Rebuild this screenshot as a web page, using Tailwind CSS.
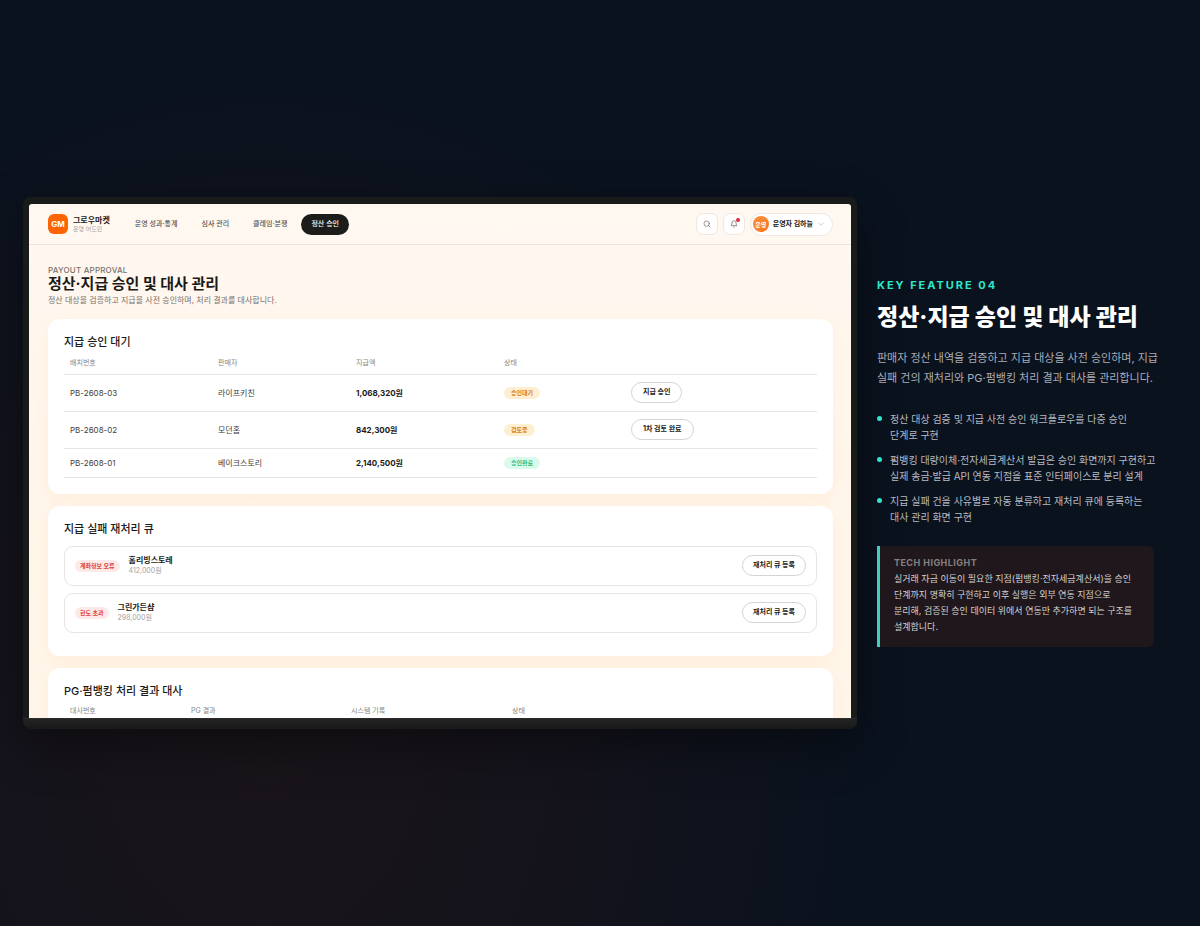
<!DOCTYPE html>
<html lang="ko">
<head>
  <title>정산·지급 승인 및 대사 관리</title>
  <meta charset="UTF-8">
  <meta name="viewport" content="width=device-width, initial-scale=1.0">
  <script src="https://cdn.jsdelivr.net/npm/@tailwindcss/browser@4"></script>
</head>
<body class="min-h-screen bg-[#0a121e] bg-[radial-gradient(ellipse_50%_75%_at_22%_82%,#19151a_0%,#15131b_45%,#0a121e_100%)] font-['Inter','Noto_Sans_CJK_KR',sans-serif] text-white">

  <main class="flex min-h-screen items-center gap-5 pl-[23px] pr-[46px]">

    <!-- Laptop -->
    <div class="min-w-0 flex-1 rounded-t-xl rounded-b-lg shadow-[0_16px_48px_rgba(0,0,0,0.4)]">
      <div class="rounded-t-lg bg-[#191b1b] px-[6px] pt-[7px]">
        <div class="aspect-[16/10] overflow-hidden rounded-t-[3px] bg-linear-to-b from-[#fff8f1] via-[#fff6eb] to-[#fff6e9] text-[#1c1917]">

          <!-- Top bar -->
          <header class="flex h-[41px] items-center border-b border-[#f0e4da] pr-[18px] pl-[19px]">
            <div class="flex items-center gap-[5px]">
              <span class="flex size-5 items-center justify-center rounded-md bg-[#fc6404] text-[8px] font-bold text-white">GM</span>
              <div>
                <p class="text-[8px] leading-[9px] font-bold">그로우마켓</p>
                <p class="text-[6px] leading-[8px] text-[#a8a29e]">운영 어드민</p>
              </div>
            </div>
            <nav class="ml-[15px] flex items-center gap-1 text-[7px] font-medium text-[#57534e]">
              <a href="#" class="flex h-[21px] items-center rounded-full px-[10px]">운영 성과·통계</a>
              <a href="#" class="flex h-[21px] items-center rounded-full px-[10px]">심사 관리</a>
              <a href="#" class="flex h-[21px] items-center rounded-full px-[10px]">클레임·분쟁</a>
              <a href="#" class="flex h-[21px] items-center rounded-full bg-[#1c1c1a] px-[10px] text-white">정산 승인</a>
            </nav>
            <div class="ml-auto flex items-center gap-[5px]">
              <button aria-label="검색" class="flex size-[22px] items-center justify-center rounded-[7px] border border-[#efe7e0] bg-white text-[#78716c]">
                <svg class="size-2" viewBox="0 0 24 24" fill="none" stroke="currentColor" stroke-width="2.2" stroke-linecap="round"><circle cx="11" cy="11" r="8"/><path d="m21 21-4.3-4.3"/></svg>
              </button>
              <button aria-label="알림" class="relative flex size-[22px] items-center justify-center rounded-[7px] border border-[#efe7e0] bg-white text-[#78716c]">
                <svg class="size-2" viewBox="0 0 24 24" fill="none" stroke="currentColor" stroke-width="2.2" stroke-linecap="round" stroke-linejoin="round"><path d="M6 8a6 6 0 0 1 12 0c0 7 3 9 3 9H3s3-2 3-9"/><path d="M10.3 21a1.94 1.94 0 0 0 3.4 0"/></svg>
                <span class="absolute top-1 right-1 size-1 rounded-full bg-[#d92c3f]"></span>
              </button>
              <button class="flex h-[23px] items-center gap-1 rounded-full border border-[#efe7e0] bg-white pr-[7px] pl-[2px]">
                <span class="flex size-4 items-center justify-center rounded-full bg-linear-to-br from-[#fb923c] to-[#f97316] text-[6px] font-bold text-white">운영</span>
                <span class="text-[7px] font-bold">운영자 김하늘</span>
                <svg class="size-2 text-[#b5aea8]" viewBox="0 0 24 24" fill="none" stroke="currentColor" stroke-width="2" stroke-linecap="round" stroke-linejoin="round"><path d="m5 9 7 7 7-7"/></svg>
              </button>
            </div>
          </header>

          <div class="pt-5 pr-[18px] pl-[19px]">
            <p class="text-[8px] leading-[10px] font-medium tracking-wide text-[#78716c]">PAYOUT APPROVAL</p>
            <h1 class="text-[15px] leading-[18px] font-bold">정산·지급 승인 및 대사 관리</h1>
            <p class="text-[8px] leading-[14px] text-[#78716c]">정산 대상을 검증하고 지급을 사전 승인하며, 처리 결과를 대사합니다.</p>

            <div class="mt-3 flex flex-col gap-3">

              <!-- Pending payouts -->
              <section class="rounded-xl bg-white p-4 shadow-[0_4px_16px_rgba(255,140,50,0.08)]">
                <h2 class="text-[11px] leading-[14px] font-medium">지급 승인 대기</h2>
                <table class="mt-[3px] w-full table-fixed text-left text-[8px] text-[#44403c]">
                  <colgroup>
                    <col class="w-[148px]"><col class="w-[138px]"><col class="w-[148px]"><col class="w-[127px]"><col>
                  </colgroup>
                  <thead class="text-[7px] text-[#8a8580]">
                    <tr class="h-[22px] border-b border-[#e7e5e4]">
                      <th class="px-[6px] font-normal">배치번호</th>
                      <th class="px-[6px] font-normal">판매자</th>
                      <th class="px-[6px] font-normal">지급액</th>
                      <th class="px-[6px] font-normal">상태</th>
                      <th class="px-[6px]"></th>
                    </tr>
                  </thead>
                  <tbody>
                    <tr class="h-[37px] border-b border-[#e7e5e4]">
                      <td class="px-[6px]">PB-2608-03</td>
                      <td class="px-[6px]">라이프키친</td>
                      <td class="px-[6px] font-bold text-[#1c1917]">1,068,320원</td>
                      <td class="px-[6px]"><span class="inline-flex h-3 items-center rounded-full bg-[#ffefd2] px-[7px] text-[6px] font-bold text-[#d97a14]">승인대기</span></td>
                      <td class="px-[6px]"><button class="flex h-[21px] items-center rounded-full border border-[#d6d3d1] px-[11px] text-[7px] font-bold text-[#1c1917]">지급 승인</button></td>
                    </tr>
                    <tr class="h-[37px] border-b border-[#e7e5e4]">
                      <td class="px-[6px]">PB-2608-02</td>
                      <td class="px-[6px]">모던홈</td>
                      <td class="px-[6px] font-bold text-[#1c1917]">842,300원</td>
                      <td class="px-[6px]"><span class="inline-flex h-3 items-center rounded-full bg-[#ffefd2] px-[7px] text-[6px] font-bold text-[#d97a14]">검토중</span></td>
                      <td class="px-[6px]"><button class="flex h-[21px] items-center rounded-full border border-[#d6d3d1] px-[11px] text-[7px] font-bold text-[#1c1917]">1차 검토 완료</button></td>
                    </tr>
                    <tr class="h-[29px] border-b border-[#e7e5e4]">
                      <td class="px-[6px]">PB-2608-01</td>
                      <td class="px-[6px]">베이크스토리</td>
                      <td class="px-[6px] font-bold text-[#1c1917]">2,140,500원</td>
                      <td class="px-[6px]"><span class="inline-flex h-3 items-center rounded-full bg-[#dcfaec] px-[7px] text-[6px] font-bold text-[#1fc184]">승인완료</span></td>
                      <td></td>
                    </tr>
                  </tbody>
                </table>
              </section>

              <!-- Failed payouts -->
              <section class="rounded-xl bg-white p-4 pb-[23px] shadow-[0_4px_16px_rgba(255,140,50,0.08)]">
                <h2 class="text-[11px] leading-[14px] font-medium">지급 실패 재처리 큐</h2>
                <ul class="mt-[10px] flex flex-col gap-[7px]">
                  <li class="flex h-10 items-center gap-[9px] rounded-[9px] border border-[#e7e5e4] px-[10px]">
                    <span class="flex h-3 items-center rounded-full bg-[#fee9e9] px-[5px] text-[6px] font-bold text-[#e0413c]">계좌정보 오류</span>
                    <div>
                      <p class="text-[8px] leading-[11px] font-bold">홈리빙스토레</p>
                      <p class="text-[7px] leading-[10px] text-[#a8a29e]">412,000원</p>
                    </div>
                    <button class="ml-auto flex h-[21px] items-center rounded-full border border-[#d6d3d1] px-[10px] text-[7px] font-bold">재처리 큐 등록</button>
                  </li>
                  <li class="flex h-10 items-center gap-[9px] rounded-[9px] border border-[#e7e5e4] px-[10px]">
                    <span class="flex h-3 items-center rounded-full bg-[#fee9e9] px-[5px] text-[6px] font-bold text-[#e0413c]">한도 초과</span>
                    <div>
                      <p class="text-[8px] leading-[11px] font-bold">그린가든샵</p>
                      <p class="text-[7px] leading-[10px] text-[#a8a29e]">298,000원</p>
                    </div>
                    <button class="ml-auto flex h-[21px] items-center rounded-full border border-[#d6d3d1] px-[10px] text-[7px] font-bold">재처리 큐 등록</button>
                  </li>
                </ul>
              </section>

              <!-- Reconciliation -->
              <section class="rounded-xl bg-white p-4 shadow-[0_4px_16px_rgba(255,140,50,0.08)]">
                <h2 class="text-[11px] leading-[14px] font-medium">PG·펌뱅킹 처리 결과 대사</h2>
                <table class="mt-[3px] w-full table-fixed text-left text-[7px] text-[#8a8580]">
                  <colgroup>
                    <col class="w-[121px]"><col class="w-[160px]"><col class="w-[161px]"><col>
                  </colgroup>
                  <thead>
                    <tr class="h-[22px] border-b border-[#e7e5e4]">
                      <th class="px-[6px] font-normal">대사번호</th>
                      <th class="px-[6px] font-normal">PG 결과</th>
                      <th class="px-[6px] font-normal">시스템 기록</th>
                      <th class="px-[6px] font-normal">상태</th>
                    </tr>
                  </thead>
                </table>
              </section>
            </div>
          </div>
        </div>
      </div>
      <div class="h-[11px] rounded-b-lg border-t border-[#2c2c2c] bg-linear-to-b from-[#232323] to-[#191919]"></div>
    </div>

    <!-- Feature description -->
    <aside class="w-[277px] shrink-0 pb-[2px]">
      <p class="text-[11px] leading-[14px] font-bold tracking-[0.18em] text-[#2ee6cb]">KEY FEATURE 04</p>
      <h2 class="mt-[10px] text-[23px] leading-[30px] font-extrabold whitespace-nowrap">정산·지급 승인 및 대사 관리</h2>
      <p class="mt-4 text-[11px] leading-5 whitespace-nowrap text-[#a9adb6]">판매자 정산 내역을 검증하고 지급 대상을 사전 승인하며, 지급<br>실패 건의 재처리와 PG·펌뱅킹 처리 결과 대사를 관리합니다.</p>
      <ul class="mt-[23px] flex flex-col gap-[9px] text-[10px] leading-4 whitespace-nowrap text-[#b6bac1]">
        <li class="flex gap-2"><span class="mt-[5px] size-[5px] shrink-0 rounded-full bg-[#2ee6cb]"></span><span>정산 대상 검증 및 지급 사전 승인 워크플로우를 다중 승인<br>단계로 구현</span></li>
        <li class="flex gap-2"><span class="mt-[5px] size-[5px] shrink-0 rounded-full bg-[#2ee6cb]"></span><span>펌뱅킹 대량이체·전자세금계산서 발급은 승인 화면까지 구현하고<br>실제 송금·발급 API 연동 지점을 표준 인터페이스로 분리 설계</span></li>
        <li class="flex gap-2"><span class="mt-[5px] size-[5px] shrink-0 rounded-full bg-[#2ee6cb]"></span><span>지급 실패 건을 사유별로 자동 분류하고 재처리 큐에 등록하는<br>대사 관리 화면 구현</span></li>
      </ul>
      <div class="mt-[21px] rounded-r-md border-l-3 border-[#3fd0bd] bg-[#1f171b] pt-[11px] pr-3 pb-3 pl-[14px]">
        <p class="text-[9px] leading-3 font-bold tracking-wider text-[#85807f]">TECH HIGHLIGHT</p>
        <p class="mt-[2px] text-[9px] leading-4 whitespace-nowrap text-[#d3d1d2]">실거래 자금 이동이 필요한 지점(펌뱅킹·전자세금계산서)을 승인<br>단계까지 명확히 구현하고 이후 실행은 외부 연동 지점으로<br>분리해, 검증된 승인 데이터 위에서 연동만 추가하면 되는 구조를<br>설계합니다.</p>
      </div>
    </aside>
  </main>
</body>
</html>
